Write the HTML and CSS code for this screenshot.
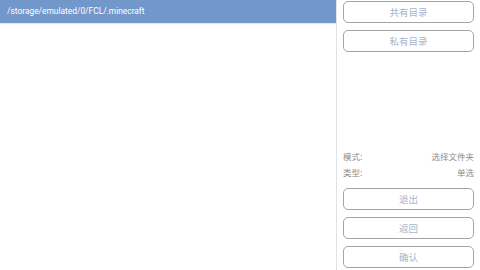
FILE: index.html
```html
<!DOCTYPE html>
<html>
<head>
<meta charset="utf-8">
<link rel="stylesheet" href="styles.css">
</head>
<body>
<div class="app">
  <div class="list">
    <div class="path">/storage/emulated/0/FCL/.minecraft</div>
  </div>
  <div class="side">
    <div class="top">
      <div class="btn">共有目录</div>
      <div class="btn">私有目录</div>
    </div>
    <div class="spacer"></div>
    <div class="info"><span>模式:</span><span>选择文件夹</span></div>
    <div class="info"><span>类型:</span><span>单选</span></div>
    <div class="bottom">
      <div class="btn">退出</div>
      <div class="btn">返回</div>
      <div class="btn">确认</div>
    </div>
  </div>
</div>
</body>
</html>
```
FILE: styles.css
```css
html, body { margin: 0; padding: 0; background: #fff; }
body { font-family: Roboto, "Noto Sans CJK SC", sans-serif; }
.app { display: flex; width: 480px; height: 270px; }
.list { width: 336px; border-right: 1px solid #e2e2e2; }
.path {
  height: 23px; line-height: 23px; background: #7297cb; color: #fff;
  font-size: 8.4px; padding-left: 7px; box-shadow: 0 1px 1px #dde6f3;
}
.side { flex: 1; display: flex; flex-direction: column; padding: 1px 6px 2px 6px; }
.top, .bottom { display: flex; flex-direction: column; gap: 7px; }
.bottom { margin-top: 8px; }
.btn {
  box-sizing: border-box; height: 22px; border: 1.5px solid #a4a4a4; border-radius: 5px;
  display: flex; align-items: center; justify-content: center;
  color: #a9b4cc; font-size: 9.5px; font-family: "Noto Sans CJK SC", sans-serif;
}
.spacer { flex: 1; }
.info {
  display: flex; justify-content: space-between; font-size: 8.5px; color: #8c8c8c;
  font-family: "Noto Sans CJK SC", sans-serif; height: 16px; line-height: 16px;
}
```
